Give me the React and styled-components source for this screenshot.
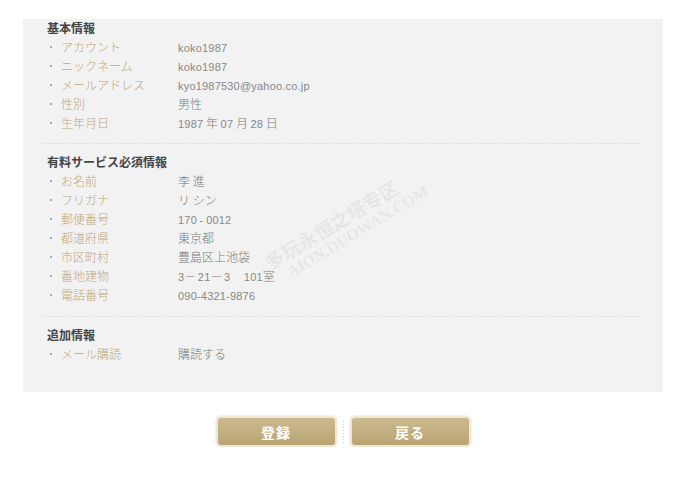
import React from 'react'
import styled, { createGlobalStyle } from 'styled-components'

const GlobalStyle = createGlobalStyle`
  body {
    margin: 0;
    background: #fff;
    font-family: "Noto Sans CJK JP", "Liberation Sans", sans-serif;
  }
`

const Page = styled.div`
  width: 676px;
  padding-top: 19px;
`

const Panel = styled.div`
  position: relative;
  margin-left: 23px;
  width: 640px;
  height: 373px;
  background: #f2f2f2;
  overflow: hidden;
`

const Section = styled.div`
  padding: 0 0 ${props => props.bottom}px 24px;
`

const Heading = styled.h3`
  margin: 0;
  font-size: 12px;
  line-height: 18px;
  font-weight: bold;
  color: #454545;
`

const Row = styled.div`
  display: flex;
  height: 19px;
  line-height: 19px;
  font-size: 12px;
`

const Label = styled.span`
  display: flex;
  align-items: center;
  width: 131px;
  color: #bca87f;
  font-weight: 300;

  &::before {
    content: '';
    width: 2px;
    height: 2px;
    margin: 0 9px 0 3px;
    background: #aaa;
  }
`

const Value = styled.span`
  color: #7a7a7a;
  font-weight: 300;
  letter-spacing: ${props => (props.wide ? '1.5px' : '0')};
`

const Latin = styled.span`
  font-family: "Liberation Sans", sans-serif;
  font-size: 11px;
  font-weight: normal;
  color: #888;
  letter-spacing: 0.2px;
`

const Separator = styled.div`
  height: 1px;
  margin: 0 21px ${props => props.bottom}px 19px;
  background-image: linear-gradient(to right, #c9c9c9 1px, transparent 1px);
  background-size: 3px 1px;
`

const Watermark = styled.div`
  position: absolute;
  left: 238px;
  top: 236px;
  transform: rotate(-31deg);
  transform-origin: left top;
  color: #e5e5e5;
  font-weight: bold;
  text-shadow: 0 0 1px #fbfbfb;
  pointer-events: none;
  line-height: 1;
`

const MarkCn = styled.div`
  font-size: 19px;
`

const MarkEn = styled.div`
  font-family: "Liberation Serif", serif;
  font-size: 16px;
  margin: 3px 0 0 14px;
`

const Actions = styled.div`
  display: flex;
  justify-content: center;
  align-items: center;
  margin: 24px 0 0 23px;
  width: 640px;
`

const Button = styled.button`
  width: 121px;
  height: 31px;
  border: 2px solid #efe8d6;
  border-radius: 5px;
  background: linear-gradient(to bottom, #cbba8f, #b9a473);
  color: #fff;
  font-family: "Noto Sans CJK JP", sans-serif;
  font-size: 14px;
  font-weight: bold;
  letter-spacing: 1px;
  box-shadow: 0 0 0 1px #f6f2e9;
  cursor: pointer;
`

const Divider = styled.div`
  width: 1px;
  height: 22px;
  margin: 0 6px;
  background-image: linear-gradient(to bottom, #c4c4c4 1px, transparent 1px);
  background-size: 1px 3px;
`

const basic = [
  ['アカウント', 'koko1987'],
  ['ニックネーム', 'koko1987'],
  ['メールアドレス', 'kyo1987530@yahoo.co.jp'],
  ['性別', '男性'],
  ['生年月日', '1987 年 07 月 28 日'],
]

const paid = [
  ['お名前', '李 進'],
  ['フリガナ', 'リ シン'],
  ['郵便番号', '170 - 0012'],
  ['都道府県', '東京都'],
  ['市区町村', '豊島区上池袋'],
  ['番地建物', '3－21－3　101室', true],
  ['電話番号', '090-4321-9876'],
]

const extra = [['メール購読', '購読する']]

// ascii runs get the narrower latin face, the rest stays in the cjk face
const splitRuns = text =>
  text.split(/([\x21-\x7e]+)/).map((part, idx) =>
    /^[\x21-\x7e]+$/.test(part) ? <Latin key={idx}>{part}</Latin> : part
  )

const Rows = ({ items }) =>
  items.map(([label, value, wide]) => (
    <Row key={label}>
      <Label>{label}</Label>
      <Value wide={wide}>{splitRuns(value)}</Value>
    </Row>
  ))

const App = () => (
  <Page>
    <GlobalStyle />
    <Panel>
      <Section bottom={11}>
        <Heading>基本情報</Heading>
        <Rows items={basic} />
      </Section>
      <Separator bottom={9} />
      <Section bottom={12}>
        <Heading>有料サービス必須情報</Heading>
        <Rows items={paid} />
      </Section>
      <Separator bottom={9} />
      <Section bottom={0}>
        <Heading>追加情報</Heading>
        <Rows items={extra} />
      </Section>
      <Watermark>
        <MarkCn>多玩永恒之塔专区</MarkCn>
        <MarkEn>AION.DUOWAN.COM</MarkEn>
      </Watermark>
    </Panel>
    <Actions>
      <Button>登録</Button>
      <Divider />
      <Button>戻る</Button>
    </Actions>
  </Page>
)

export default App
